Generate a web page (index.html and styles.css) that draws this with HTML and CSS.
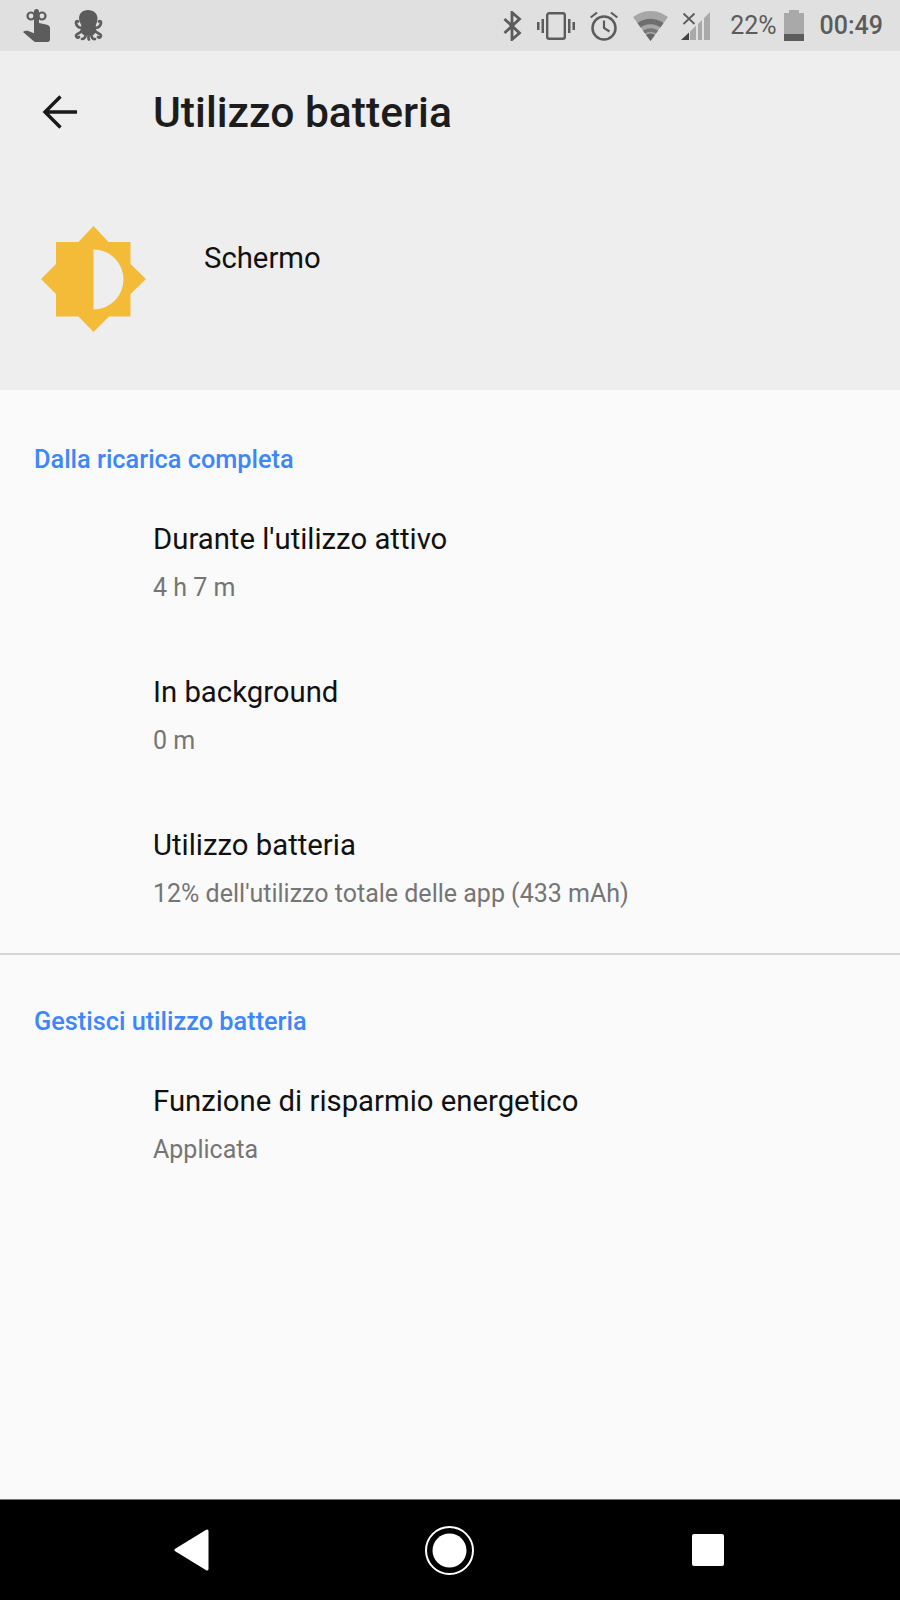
FILE: index.html
```html
<!DOCTYPE html>
<html lang="it">
<head>
    <meta charset="UTF-8">
    <meta name="viewport" content="width=device-width, initial-scale=1.0">
    <title>Utilizzo batteria</title>
    <link rel="stylesheet" href="styles.css">
</head>
<body>
    <div class="phone">
        <div class="status-bar">
            <div class="status-left">
                <svg width="28" height="33" viewBox="0 0 28 33">
                    <circle cx="8" cy="7" r="3.500" fill="none" stroke="#5c5c5c" stroke-width="2.200"/>
                    <circle cx="19" cy="7" r="3.500" fill="none" stroke="#5c5c5c" stroke-width="2.200"/>
                    <path fill="#5c5c5c" d="M11 2.500a2.500 2.500 0 0 1 5 0V14l7 1.500c2.500.6 4 1.500 4 3.500v11.500c0 1.500-1 2.500-2.500 2.500H13c-1 0-2-.5-2.500-1L0 23c1-1 4-1.500 6-.8l5 2z"/>
                </svg>
                <svg width="29" height="31" viewBox="0 0 29 31">
                    <path fill="#5c5c5c" d="M14 0c5.500 0 9.500 3.500 9.500 8.500 0 3.500-1.500 5.500-2 8 0 2 1 3.500 1 5l-3 3.500h-10l-3.500-3.500c0-1.500 1.500-3 1.500-5 0-2.500-2.500-4.500-2.500-8C5 3.500 8.500 0 14 0z"/>
                    <g fill="none" stroke="#5c5c5c" stroke-width="2.700" stroke-linecap="round">
                        <path d="M8 17.500C5 18.500 2.500 16 2 13c-.2-1.500 1-2.500 2-1.500"/>
                        <path d="M21 17.500c3 1 5.500-1.500 6-4.500.2-1.500-1-2.500-2-1.500"/>
                        <path d="M8 21c-2 2.500-5.500 2-6 4.500-.2 2 2 2.500 3 1.500"/>
                        <path d="M21 21c2 2.500 5.500 2 6 4.500.2 2-2 2.500-3 1.500"/>
                        <path d="M12 24c-.5 3-2 5-4 5"/>
                        <path d="M17 24c.5 3 1.500 5.500 4 5"/>
                        <path d="M14.500 25v2.500c0 1.500 0 2 .5 2"/>
                    </g>
                </svg>
            </div>
            <div class="status-right">
                <svg class="bt" width="19" height="30" viewBox="0 0 19 30">
                    <path fill="none" stroke="#5c5c5c" stroke-width="2.800" d="M1.500 8l15 14-7.500 6.500V1.500L16.500 8l-15 14"/>
                </svg>
                <svg class="vibrate" width="38" height="28" viewBox="0 0 38 28">
                    <rect x="10.200" y="1.200" width="17.600" height="25.600" rx="2" fill="none" stroke="#5c5c5c" stroke-width="2.400"/>
                    <path fill="#5c5c5c" d="M4.500 7H7v14H4.500zM0 10h2.500v8H0zM31 7h2.500v14H31zM35.500 10H38v8h-2.500z"/>
                </svg>
                <svg class="alarm" width="28" height="30" viewBox="0 0 28 30">
                    <circle cx="14" cy="17" r="11.500" fill="none" stroke="#5c5c5c" stroke-width="2.500"/>
                    <path fill="none" stroke="#5c5c5c" stroke-width="2.200" d="M14 9.500V17l5.500 3.500M.7 6.500L7 1.500M27.300 6.500L21 1.500"/>
                </svg>
                <svg class="wifi" width="35" height="30" viewBox="0 0 35 30">
                    <clipPath id="wifi-wedge"><path d="M17.500 30L0 6 10 0H25L35 6z"/></clipPath>
                    <g clip-path="url(#wifi-wedge)" fill="none">
                        <circle cx="17.500" cy="30" r="30" fill="#a6a6a6"/>
                        <circle cx="17.500" cy="30" r="19.500" stroke="#6e6e6e" stroke-width="5.500"/>
                        <circle cx="17.500" cy="30" r="11" stroke="#777" stroke-width="3.500"/>
                        <circle cx="17.500" cy="30" r="7.500" fill="#666"/>
                    </g>
                </svg>
                <svg class="signal" width="29" height="30" viewBox="0 0 29 30">
                    <path fill="none" stroke="#5c5c5c" stroke-width="1.800" d="M2.500 2.500l11 10.500M13.500 2.500l-11 10.500"/>
                    <path fill="#444" d="M0 29l8-7.500V29z"/>
                    <path fill="#a9a9a9" d="M9 29v-8.500l6-5.800V29zM17 29V13l4-4v20zM23 29V7l6-6v28z"/>
                </svg>
                <span class="pct">22%</span>
                <div class="battery"><div class="battery-tip"></div><div class="battery-body"><div class="battery-level"></div></div></div>
                <span class="clock">00:49</span>
            </div>
        </div>

        <header class="top">
            <div class="toolbar">
                <svg class="back" width="35" height="34" viewBox="0 0 35 34">
                    <path fill="none" stroke="#1a1a1a" stroke-width="3.400" d="M35 17H3M18.500 1.500L3 17l15.500 15.500"/>
                </svg>
                <h1>Utilizzo batteria</h1>
            </div>
            <div class="app-row">
                <svg class="sun" width="105" height="106" viewBox="0 0 105 106">
                    <path fill="#f3bb37" d="M52.500 0l15 16h22v22L105 53 89.500 68v22.500H68L52.500 106l-15-15.500H15V68L0 53l15-15V16h22.500z"/>
                    <path fill="#eeeeee" d="M52.500 23.500a30 30 0 0 1 0 60z"/>
                </svg>
                <div class="app-name">Schermo</div>
            </div>
        </header>

        <main class="content">
            <section class="group">
                <h2>Dalla ricarica completa</h2>
                <div class="item">
                    <div class="item-title">Durante l'utilizzo attivo</div>
                    <div class="item-sub">4 h 7 m</div>
                </div>
                <div class="item">
                    <div class="item-title">In background</div>
                    <div class="item-sub">0 m</div>
                </div>
                <div class="item">
                    <div class="item-title">Utilizzo batteria</div>
                    <div class="item-sub">12% dell'utilizzo totale delle app (433 mAh)</div>
                </div>
            </section>
            <section class="group group-last">
                <h2>Gestisci utilizzo batteria</h2>
                <div class="item">
                    <div class="item-title">Funzione di risparmio energetico</div>
                    <div class="item-sub">Applicata</div>
                </div>
            </section>
        </main>

        <nav class="nav-bar">
            <svg width="36" height="42" viewBox="0 0 36 42">
                <path fill="#fff" stroke="#fff" stroke-width="3" stroke-linejoin="round" d="M33 2v38L2 21z"/>
            </svg>
            <svg class="nav-home" width="49" height="49" viewBox="0 0 49 49">
                <circle cx="24.500" cy="24.500" r="23.500" fill="none" stroke="#fff" stroke-width="2"/>
                <circle cx="24.500" cy="24.500" r="17" fill="#fff"/>
            </svg>
            <div class="nav-square"></div>
        </nav>
    </div>
</body>
</html>
```
FILE: styles.css
```css
* {
    box-sizing: border-box;
}
html, body {
    margin: 0;
    padding: 0;
}
body {
    font-family: Roboto, "Liberation Sans", sans-serif;
    background-color: #fafafa;
}
.phone {
    width: 900px;
    height: 1600px;
    display: flex;
    flex-direction: column;
    overflow: hidden;
}
.status-bar {
    height: 51px;
    flex: none;
    background-color: #e0e0e0;
    display: flex;
    justify-content: space-between;
    align-items: center;
    padding: 0 17px 0 23px;
}
.status-left {
    display: flex;
    align-items: center;
    gap: 23px;
}
.status-right {
    display: flex;
    align-items: center;
    color: #5c5c5c;
    font-size: 25px;
    font-weight: 500;
}
.bt { margin-right: 15px; }
.vibrate { margin-right: 15px; }
.alarm { margin-right: 15px; }
.wifi { margin-right: 13px; }
.signal { margin-right: 20px; }
.pct {
    font-weight: 400;
    margin-right: 7px;
}
.battery {
    width: 20px;
    height: 31px;
    margin-right: 16px;
    display: flex;
    flex-direction: column;
    align-items: center;
}
.battery-tip {
    width: 10px;
    height: 3px;
    background-color: #a9a9a9;
}
.battery-body {
    flex: 1;
    width: 100%;
    background-color: #a9a9a9;
    display: flex;
    align-items: flex-end;
}
.battery-level {
    width: 100%;
    height: 7px;
    background-color: #5c5c5c;
}
.top {
    height: 339px;
    flex: none;
    background-color: #eeeeee;
}
.toolbar {
    height: 122px;
    display: flex;
    align-items: center;
    padding-left: 42px;
}
.back {
    margin-right: 76px;
}
h1 {
    margin: 0;
    font-size: 42.600px;
    font-weight: 500;
    color: #1c1c1c;
}
.app-row {
    display: flex;
    align-items: flex-start;
    padding: 53px 0 0 41px;
}
.app-name {
    margin: 15px 0 0 58px;
    font-size: 29.300px;
    color: #111;
}
.content {
    flex: 1;
    background-color: #fafafa;
}
.group {
    padding: 55px 0 44px;
    border-bottom: 2px solid #d6d6d6;
}
.group-last {
    padding-top: 52px;
    border-bottom: none;
}
h2 {
    margin: 0 0 23px;
    padding-left: 34px;
    font-size: 25.300px;
    line-height: 30px;
    font-weight: 500;
    color: #3d86fb;
}
.item {
    padding: 24px 0 0 153px;
}
.item + .item {
    margin-top: 48px;
}
.item-title {
    font-size: 29.300px;
    line-height: 34px;
    color: #111;
}
.item-sub {
    margin-top: 17px;
    font-size: 25px;
    line-height: 30px;
    color: #757575;
}
.nav-bar {
    height: 101px;
    flex: none;
    background-color: #000;
    border-top: 1px solid #777;
    display: flex;
    align-items: center;
    justify-content: space-between;
    padding: 0 176px 0 174px;
}
.nav-home {
    margin-right: 3px;
}
.nav-square {
    width: 32px;
    height: 32px;
    border-radius: 2px;
    background-color: #fff;
}
```
